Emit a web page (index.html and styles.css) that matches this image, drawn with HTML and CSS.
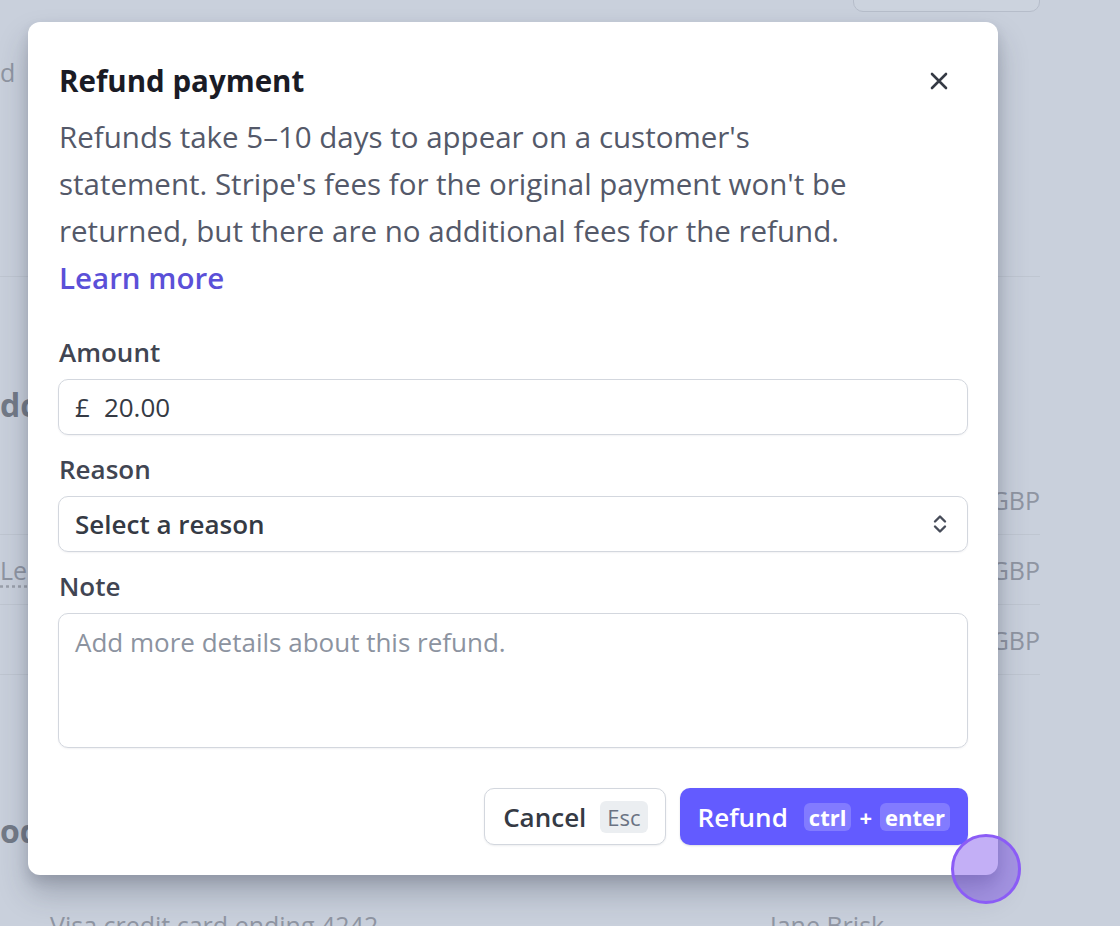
FILE: index.html
```html
<!DOCTYPE html>
<html lang="en">
<head>
<meta charset="utf-8">
<title>Refund payment</title>
<link rel="stylesheet" href="styles.css">
</head>
<body>
<div class="page">
  <div class="top"><div class="top-btn"></div></div>
  <div class="sec sec-status"><span class="muted">d</span></div>
  <div class="sec-head head-a">dc</div>
  <div class="trow"><span class="muted"></span><span class="muted">GBP</span></div>
  <div class="trow"><span class="muted dotted">Le</span><span class="muted">GBP</span></div>
  <div class="trow"><span class="muted"></span><span class="muted">GBP</span></div>
  <div class="sec-head head-b">od</div>
  <div class="brow">
    <span class="muted">Visa credit card ending 4242</span>
    <span class="muted">Jane Brisk</span>
  </div>
</div>

<div class="modal" role="dialog" aria-labelledby="refund-title">
  <div class="modal-head">
    <h2 class="modal-title" id="refund-title">Refund payment</h2>
    <button class="close" aria-label="Close">
      <svg width="20" height="20" viewBox="0 0 20 20" aria-hidden="true"><path d="M3 3L17 17M17 3L3 17" fill="none" stroke="currentColor" stroke-width="2.6" stroke-linecap="round"/></svg>
    </button>
  </div>
  <p class="desc">Refunds take 5–10 days to appear on a customer's statement. Stripe's fees for the original payment won't be returned, but there are no additional fees for the refund. <a class="link" href="#">Learn more</a></p>

  <div class="fields">
    <div class="field">
      <span class="label">Amount</span>
      <div class="control"><span class="cur">£</span><span>20.00</span></div>
    </div>
    <div class="field">
      <span class="label">Reason</span>
      <div class="control select"><span class="select-text">Select a reason</span>
        <svg class="chev" width="16" height="24" viewBox="0 0 16 24" aria-hidden="true"><path d="M3 9.5L8 4.5L13 9.5M3 14.5L8 19.5L13 14.5" fill="none" stroke="currentColor" stroke-width="2.4" stroke-linecap="round" stroke-linejoin="round"/></svg>
      </div>
    </div>
    <div class="field">
      <span class="label">Note</span>
      <div class="control area"><span class="placeholder">Add more details about this refund.</span></div>
    </div>
  </div>

  <div class="actions">
    <button class="btn btn-secondary">Cancel <kbd class="key">Esc</kbd></button>
    <button class="btn btn-primary">Refund <span class="combo"><kbd class="key key-inv">ctrl</kbd><span class="plus">+</span><kbd class="key key-inv">enter</kbd></span></button>
  </div>
</div>

<div class="cursor"></div>
</body>
</html>
```

FILE: styles.css
```css
html, body {
  margin: 0;
  padding: 0;
}
body {
  width: 1120px;
  height: 926px;
  overflow: hidden;
  position: relative;
  background: #c9d0dc;
  font-family: "Open Sans", "Noto Sans", sans-serif;
}

/* background dashboard (dimmed) */
.page {
  width: 1040px;
  display: flex;
  flex-direction: column;
  color: #8f95a2;
}
.top {
  height: 12px;
  display: flex;
  justify-content: flex-end;
}
.top-btn {
  width: 187px;
  height: 44px;
  margin-top: -32px;
  box-sizing: border-box;
  border: 1px solid #b6bdca;
  border-radius: 10px;
  background: #ccd3de;
}
.muted {
  font-size: 25px;
  line-height: 30px;
  color: #8f95a2;
}
.sec-status {
  height: 265px;
  box-sizing: border-box;
  padding-top: 45px;
  border-bottom: 1px solid #bfc6d1;
}
.sec-head {
  font-size: 32px;
  font-weight: 700;
  line-height: 36px;
  color: #737a87;
}
.head-a {
  padding-top: 110px;
  margin-bottom: 42px;
}
.head-b {
  padding-top: 138px;
}
.trow {
  height: 70px;
  box-sizing: border-box;
  border-bottom: 1px solid #bfc6d1;
  display: flex;
  align-items: center;
  justify-content: space-between;
}
.dotted {
  text-decoration: underline dotted #9aa0ab;
  text-underline-offset: 6px;
}
.brow {
  margin-top: 61px;
  display: grid;
  grid-template-columns: 720px auto;
  padding-left: 50px;
}

/* modal */
.modal {
  position: absolute;
  left: 28px;
  top: 22px;
  width: 970px;
  box-sizing: border-box;
  padding: 39px 30px 30px;
  background: #ffffff;
  border-radius: 12px;
  box-shadow: 0 18px 30px rgba(40, 46, 64, 0.26), 0 6px 12px rgba(40, 46, 64, 0.14);
}
.modal-head {
  height: 40px;
  display: flex;
  align-items: center;
  justify-content: space-between;
}
.modal-title {
  margin: 0 0 0 1px;
  font-size: 29.5px;
  font-weight: 700;
  line-height: 40px;
  color: #1a1b25;
}
.close {
  width: 40px;
  height: 40px;
  margin-right: 9px;
  padding: 0;
  border: 0;
  background: none;
  color: #353a44;
  display: flex;
  align-items: center;
  justify-content: center;
}
.desc {
  margin: 12px 0 0 1px;
  max-width: 820px;
  font-size: 29.5px;
  line-height: 47px;
  color: #545969;
}
.link {
  color: #5b50d8;
  font-weight: 600;
  text-decoration: none;
}

.fields {
  margin-top: 35px;
  display: flex;
  flex-direction: column;
}
.field + .field {
  margin-top: 18px;
}
.label {
  display: block;
  margin: 0 0 11px 1px;
  font-size: 26px;
  font-weight: 600;
  line-height: 32px;
  color: #414552;
}
.control {
  height: 56px;
  box-sizing: border-box;
  border: 1px solid #d3d7de;
  border-radius: 10px;
  box-shadow: 0 1px 2px rgba(30, 40, 60, 0.06);
  padding: 0 18px 0 16px;
  display: flex;
  align-items: center;
  font-size: 26px;
  color: #353a44;
}
.cur {
  margin-right: 14px;
}
.select {
  justify-content: space-between;
}
.select-text {
  font-weight: 600;
}
.chev {
  color: #474c59;
  margin-right: 1px;
}
.area {
  height: 135px;
  align-items: flex-start;
  padding-top: 11px;
}
.placeholder {
  line-height: 34px;
  color: #8c93a0;
}

.actions {
  margin-top: 40px;
  display: flex;
  justify-content: flex-end;
  gap: 14px;
}
.btn {
  height: 57px;
  box-sizing: border-box;
  border-radius: 10px;
  display: flex;
  align-items: center;
  font-family: inherit;
  font-size: 26px;
  font-weight: 600;
  cursor: pointer;
}
.btn-secondary {
  padding: 0 17px 0 18px;
  gap: 14px;
  background: #ffffff;
  color: #353a44;
  border: 1px solid #d3d7de;
  box-shadow: 0 1px 2px rgba(30, 40, 60, 0.08);
}
.btn-primary {
  padding: 0 18px;
  gap: 16px;
  background: #635bff;
  color: #ffffff;
  border: 0;
  box-shadow: 0 1px 2px rgba(30, 40, 60, 0.15);
}
.key {
  font-family: inherit;
  font-size: 22px;
  font-weight: 400;
  line-height: 32px;
  height: 32px;
  padding: 0 7px;
  border-radius: 6px;
  background: #ebeef1;
  color: #6a7383;
}
.combo {
  display: flex;
  align-items: center;
  gap: 8px;
}
.key-inv {
  height: 28px;
  line-height: 28px;
  padding: 0 5px;
  font-weight: 700;
  background: rgba(255, 255, 255, 0.2);
  color: #ffffff;
}
.plus {
  font-size: 22px;
  font-weight: 700;
}

.cursor {
  position: absolute;
  left: 951px;
  top: 834px;
  width: 70px;
  height: 70px;
  box-sizing: border-box;
  border-radius: 50%;
  border: 3px solid #8b5cf6;
  background: rgba(116, 69, 234, 0.43);
}
```
